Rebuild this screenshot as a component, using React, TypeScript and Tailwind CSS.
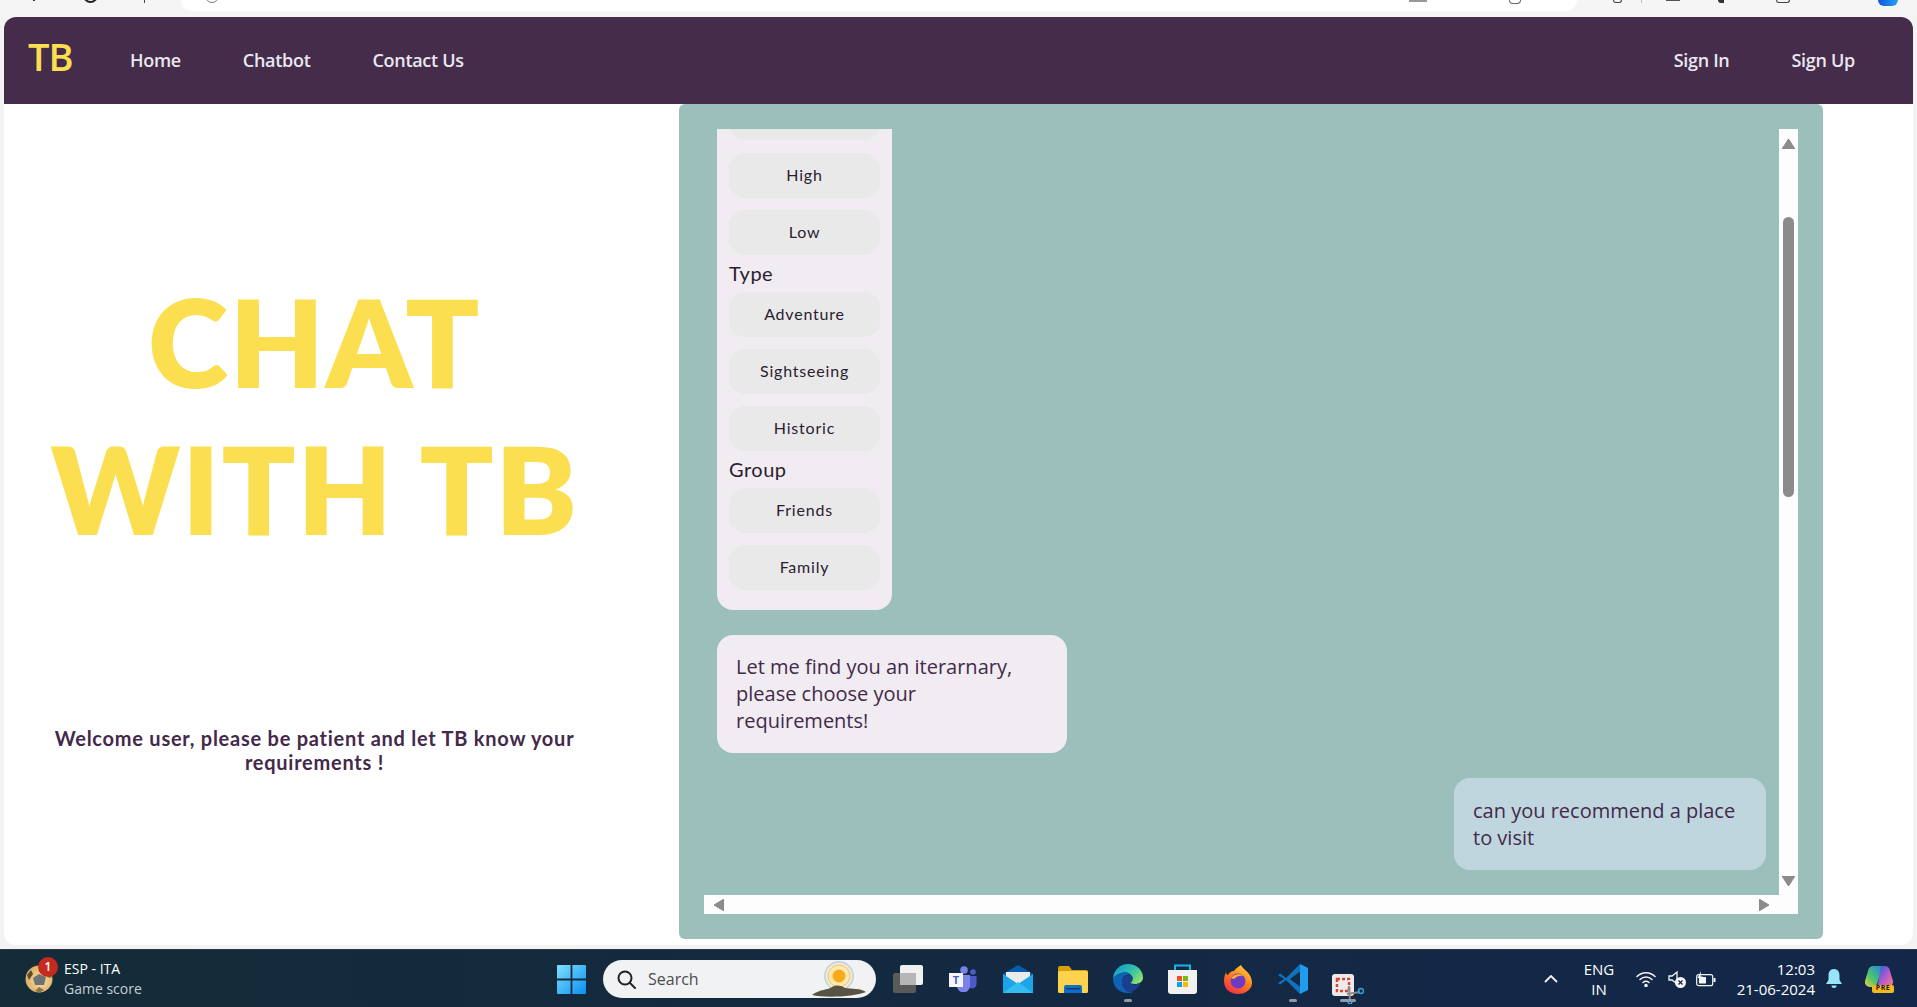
import React from 'react';

const body = { fontFamily: '"Open Sans", "Liberation Sans", sans-serif' };
const heading = { fontFamily: 'Lato, "Open Sans", sans-serif' };

function Option({ label }: { label: string }) {
  return (
    <button className="mt-3 h-[45px] w-full shrink-0 rounded-2xl bg-[#e9e9e9] pb-[2px] text-center text-[16px] tracking-[0.8px] text-[#2b1c30]">
      {label}
    </button>
  );
}

function GroupLabel({ label }: { label: string }) {
  return <div className="flex h-[37px] shrink-0 items-center pb-[2px] text-[20px] tracking-[0.5px] text-[#2b1c30]">{label}</div>;
}

function Arrow({ dir }: { dir: 'up' | 'down' | 'left' | 'right' }) {
  const points = { up: '6.5,0 13,10 0,10', down: '0,0 13,0 6.5,10', left: '10,0 10,12 0,6', right: '0,0 10,6 0,12' }[dir];
  const horizontal = dir === 'left' || dir === 'right';
  return (
    <svg width={horizontal ? 10 : 13} height={horizontal ? 12 : 10} viewBox={horizontal ? '0 0 10 12' : '0 0 13 10'} className="shrink-0">
      <polygon points={points} fill="#8b8b8b" stroke="#8b8b8b" strokeLinejoin="round" strokeWidth="1" />
    </svg>
  );
}

function ChatPanel() {
  return (
    <section className="flex h-full w-[1144px] flex-col rounded-md bg-[#9bbfbb] p-[25px]">
      <div className="flex h-[785px] flex-col">
        <div className="flex min-h-0 flex-1">
          <div className="min-w-0 flex-1 overflow-hidden px-[13px]">
            <div className="flex w-[175px] flex-col overflow-hidden rounded-b-2xl bg-[#f0ecf1] px-3 pb-5" style={heading}>
              <div className="-mt-[34px] h-[45px] shrink-0 rounded-2xl bg-[#e9e9e9]" />
              <div className="h-px shrink-0" />
              <Option label="High" />
              <Option label="Low" />
              <GroupLabel label="Type" />
              <div className="-mt-3" />
              <Option label="Adventure" />
              <Option label="Sightseeing" />
              <Option label="Historic" />
              <GroupLabel label="Group" />
              <div className="-mt-3" />
              <Option label="Friends" />
              <Option label="Family" />
            </div>
            <div className="mt-[25px] w-[350px] rounded-2xl bg-[#f0ecf1] pb-[19px] pl-[19px] pr-5 pt-[18px] text-[20px] leading-[27px] text-[#43294a]" style={body}>
              Let me find you an iterarnary, please choose your requirements!
            </div>
            <div className="ml-auto mt-[25px] w-[312px] rounded-2xl bg-[#bfd6de] px-[19px] py-[19px] text-[20px] leading-[27px] text-[#43294a]" style={body}>
              can you recommend a place to visit
            </div>
          </div>
          <div className="flex w-[19px] shrink-0 flex-col items-center bg-[#fdfdfd] pb-[9px] pt-[10px]">
            <Arrow dir="up" />
            <div className="mt-[68px] h-[280px] w-[11px] rounded-full bg-[#8b8b8b]" />
            <div className="flex-1" />
            <Arrow dir="down" />
          </div>
        </div>
        <div className="flex h-[19px] shrink-0 items-center justify-between bg-[#fdfdfd] pl-[10px] pr-[29px]">
          <Arrow dir="left" />
          <Arrow dir="right" />
        </div>
      </div>
    </section>
  );
}

function Navbar() {
  return (
    <nav className="flex h-[87px] shrink-0 items-center rounded-t-xl bg-[#452c4a] pl-[24px] pr-[58px] font-semibold text-[#e9e8f0]" style={body}>
      <span className="-mt-2 w-[102px] text-[38px] tracking-[-1px] text-[#fbdf50]">TB</span>
      <a className="text-[18px] tracking-[-0.3px]">Home</a>
      <a className="ml-[62px] text-[18px] tracking-[-0.3px]">Chatbot</a>
      <a className="ml-[62px] text-[18px] tracking-[-0.3px]">Contact Us</a>
      <a className="ml-auto text-[18px] tracking-[-0.3px]">Sign In</a>
      <a className="ml-[62px] text-[18px] tracking-[-0.3px]">Sign Up</a>
    </nav>
  );
}

function BrowserStrip() {
  return (
    <div className="flex h-[17px] shrink-0 items-start overflow-hidden bg-[#f5f5f5]">
      <div className="flex w-[181px] shrink-0 items-start">
        <div className="ml-[33px] h-px w-[2px] bg-[#333]" />
        <div className="-mt-3 ml-[48px] h-[15px] w-[15px] rounded-full border-2 border-[#222]" />
        <div className="ml-[46px] h-[3px] w-px bg-[#444]" />
      </div>
      <div className="flex h-[11px] w-[1396px] shrink-0 items-start rounded-b-[14px] bg-white">
        <div className="-mt-3 ml-[24px] h-[15px] w-[14px] rounded-full border border-[#777]" />
        <div className="ml-[1190px] h-[2px] w-[18px] bg-[#999]" />
        <div className="ml-[82px] h-[4px] w-[12px] rounded-b-md border-x border-b border-[#666]" />
      </div>
      <div className="flex flex-1 items-start">
        <div className="ml-[36px] h-[3px] w-[9px] rounded-b-full border-x border-b border-[#444]" />
        <div className="ml-[19px] h-[3px] w-px bg-[#bbb]" />
        <div className="ml-[24px] h-px w-[14px] bg-[#555]" />
        <div className="ml-[38px] h-[3px] w-[6px] rounded-bl-full bg-[#333]" />
        <div className="ml-[52px] h-[3px] w-[14px] rounded-b-sm border-x border-b border-[#444]" />
        <div className="ml-[88px] h-[6px] w-[20px] rounded-b-full bg-gradient-to-r from-[#1358d8] to-[#2ba0f5]" />
      </div>
    </div>
  );
}

function Ball() {
  return (
    <svg width="28" height="28" viewBox="0 0 28 28">
      <defs>
        <radialGradient id="ballg" cx="0.55" cy="0.55" r="0.6">
          <stop offset="0" stopColor="#f8e2b0" />
          <stop offset="1" stopColor="#dca85a" />
        </radialGradient>
      </defs>
      <circle cx="14" cy="14" r="13.5" fill="url(#ballg)" />
      <polygon points="14,9 21,12 19,20 10,20 8,13" fill="#6e7272" />
      <path d="M2 10 L6 5 L8 9 L4 15 Z" fill="#5e4a2c" />
      <path d="M10 26 L14 22 L19 25 L15 27.5 Z" fill="#8c7448" />
      <path d="M23 5 L27 12 L24 13 L21 8 Z" fill="#7c6a48" />
    </svg>
  );
}

function WindowsLogo() {
  return (
    <svg width="29" height="29" viewBox="0 0 29 29">
      <defs>
        <linearGradient id="wing" x1="0" y1="0" x2="1" y2="1">
          <stop offset="0" stopColor="#7fe0ff" />
          <stop offset="1" stopColor="#0a8fef" />
        </linearGradient>
      </defs>
      <path d="M0 1a1 1 0 0 1 1-1h12.6v13.6H0zM15.4 0H28a1 1 0 0 1 1 1v12.6H15.4zM0 15.4h13.6V29H1a1 1 0 0 1-1-1zM15.4 15.4H29V28a1 1 0 0 1-1 1H15.4z" fill="url(#wing)" />
    </svg>
  );
}

function SearchArt() {
  return (
    <svg width="58" height="38" viewBox="0 0 58 38">
      <circle cx="29" cy="16" r="14" fill="#fbeed0" stroke="#c4d8e0" strokeWidth="2" />
      <circle cx="29" cy="16" r="11" fill="#fde9b0" stroke="#eebc78" strokeWidth="1" />
      <circle cx="29" cy="16" r="6.5" fill="#f7ab1a" />
      <path d="M2 35 C10 29 18 30 22 27 C27 24 32 26 35 28 C42 29 50 28 56 32 C44 37 14 38 2 35Z" fill="#5a5344" />
    </svg>
  );
}

function TaskView() {
  return (
    <svg width="30" height="28" viewBox="0 0 30 28">
      <rect x="0" y="8" width="23" height="20" rx="2" fill="#5a5a5a" />
      <rect x="7" y="0" width="23" height="20" rx="2" fill="#f0f0f0" />
      <rect x="7" y="8" width="16" height="12" fill="#b6b6b6" />
    </svg>
  );
}

function Teams() {
  return (
    <svg width="28" height="26" viewBox="0 0 28 26">
      <circle cx="15" cy="4" r="3.8" fill="#7b83eb" />
      <circle cx="24" cy="6" r="2.8" fill="#5059c9" />
      <path d="M19 10h8.5v8a4.5 4.5 0 0 1-8.5 2z" fill="#5059c9" />
      <path d="M8 9h13v11a6.5 6.5 0 0 1-13 0z" fill="#7b83eb" />
      <rect x="0" y="7" width="14" height="14" fill="#f4f4fb" />
      <text x="7" y="18" textAnchor="middle" fontSize="11" fontWeight="700" fill="#5059c9" fontFamily="Open Sans">T</text>
    </svg>
  );
}

function Mail() {
  return (
    <svg width="30" height="28" viewBox="0 0 30 28">
      <path d="M15 0 L30 9 V12 H0 V9Z" fill="#0b5cab" />
      <path d="M3 7 H27 V13 L15 20 L3 13Z" fill="#e9eaec" />
      <path d="M0 9 L15 19 L30 9 V28 H0Z" fill="#1ba4e8" />
      <path d="M0 28 L15 17 L30 28Z" fill="#35bdf2" />
    </svg>
  );
}

function Folder() {
  return (
    <svg width="30" height="27" viewBox="0 0 30 27">
      <path d="M0 2a2 2 0 0 1 2-2h9l3 4h14a2 2 0 0 1 2 2v6H0z" fill="#d99e0b" />
      <rect x="0" y="5" width="30" height="22" rx="1.5" fill="#fdd34d" />
      <path d="M6 27v-6a2 2 0 0 1 2-2h14a2 2 0 0 1 2 2v6z" fill="#0f6fc6" />
      <rect x="8" y="22" width="14" height="1.5" fill="#083f78" />
    </svg>
  );
}

function Edge() {
  return (
    <svg width="30" height="30" viewBox="0 0 30 30">
      <defs>
        <linearGradient id="edge1" x1="0" y1="0" x2="1" y2="0.7">
          <stop offset="0" stopColor="#0f8fd8" />
          <stop offset="0.6" stopColor="#35c1a8" />
          <stop offset="1" stopColor="#8fe36a" />
        </linearGradient>
      </defs>
      <path d="M15 0C23.5 0 30 6 30 13.5c0 4.5-4 6.5-8 6.5-3 0-5-1-5-1 2-1 3-3 2.5-5C18.5 10 15 8 11 8.5 6 9 1.500 12 0 15 0.500 6 7 0 15 0z" fill="url(#edge1)" />
      <path d="M0 15c1.500-3 6-6 11-6.500 4-.5 6 1 6.500 2-4-.5-8.500 2-8.500 7 0 5 4 10 11 11-2 .5-3.500.5-5 .5C6.500 29 0 23 0 15z" fill="#0d63b5" />
      <path d="M9 18c0-5 4.500-7.500 8.500-7 1.500.5 2.500 1.500 2 3.500-.5 2-2 3.500-3 4.500 3 2 8 2 11.500-1-2.500 6-7 10-12 10.500C12 27 9 23 9 18z" fill="#1b3f8f" />
    </svg>
  );
}

function Store() {
  return (
    <svg width="29" height="30" viewBox="0 0 29 30">
      <path d="M7 7V1.500h15V7" fill="none" stroke="#19b5e8" strokeWidth="2" />
      <path d="M0 6h29v21a3 3 0 0 1-3 3H3a3 3 0 0 1-3-3z" fill="#f1f1f1" />
      <rect x="9" y="12" width="5" height="5" fill="#f25022" />
      <rect x="15" y="12" width="5" height="5" fill="#7fba00" />
      <rect x="9" y="18" width="5" height="5" fill="#00a4ef" />
      <rect x="15" y="18" width="5" height="5" fill="#ffb900" />
    </svg>
  );
}

function Firefox() {
  return (
    <svg width="28" height="29" viewBox="0 0 28 29">
      <defs>
        <linearGradient id="ffx" x1="0.8" y1="0" x2="0.2" y2="1">
          <stop offset="0" stopColor="#ffd23f" />
          <stop offset="0.5" stopColor="#ff7b1c" />
          <stop offset="1" stopColor="#f2294c" />
        </linearGradient>
      </defs>
      <path d="M17 0c1 3 5 5 8 9 3 4 3 8 3 9 0 6-6 11-14 11S0 24 0 16C0 12 1 9 2 7c0 2 1 3 2 3 1-2 3-4 6-4 1-2 4-4 7-6z" fill="url(#ffx)" />
      <circle cx="14" cy="16" r="7.5" fill="#6e3bc4" />
      <path d="M7 13c3-4 9-5 13-2-3-1-8 0-10 3z" fill="#ffb02e" />
    </svg>
  );
}

function VSCode() {
  return (
    <svg width="30" height="30" viewBox="0 0 30 30">
      <path d="M22 0 L8 14 L2.500 9.500 L0 11 L6 15 L0 19 L2.500 20.500 L8 16 L22 30 V22.500 L12 15 L22 7.500 Z" fill="#0f72bd" />
      <path d="M22 0 L30 4 V26 L22 30 Z" fill="#1f9cf0" />
    </svg>
  );
}

function Snip() {
  return (
    <svg className="mt-5" width="32" height="30" viewBox="0 0 32 30">
      <rect x="0" y="0" width="22" height="22" rx="3" fill="#eceaea" />
      <rect x="5" y="5" width="12" height="12" fill="none" stroke="#d9452e" strokeWidth="2.500" strokeDasharray="3 2" />
      <path d="M17 12 L18 28" stroke="#8a8a8a" strokeWidth="2" />
      <path d="M15 20 L28 18" stroke="#8a8a8a" strokeWidth="2" />
      <circle cx="29" cy="17" r="2.500" fill="none" stroke="#2ea3dc" strokeWidth="1.500" />
      <circle cx="18" cy="28" r="1.800" fill="none" stroke="#2ea3dc" strokeWidth="1.500" />
    </svg>
  );
}

function TaskIcon({ children, running }: { children: React.ReactNode; running?: 'short' | 'wide' }) {
  return (
    <div className="relative flex h-[56px] w-[55px] shrink-0 items-center justify-center">
      {children}
      {running === 'short' && <span className="absolute bottom-[5px] h-[3px] w-2 rounded-full bg-[#8f9aa3]" />}
      {running === 'wide' && <span className="absolute bottom-[5px] h-[3px] w-[16px] rounded-full bg-[#8f9aa3]" />}
    </div>
  );
}

function Taskbar() {
  return (
    <footer className="flex h-[58px] shrink-0 items-center border-t border-[#2b3a44] bg-gradient-to-r from-[#142b38] to-[#13274a] pt-px text-white" style={body}>
      <div className="relative ml-[25px] flex h-full w-[532px] shrink-0 items-center">
        <Ball />
        <span className="absolute left-[13px] top-[6px] flex h-5 w-5 items-center justify-center rounded-full bg-[#c42b1c] text-[12px] font-semibold">1</span>
        <div className="ml-[11px] flex flex-col text-[14px] leading-[20px]">
          <span>ESP - ITA</span>
          <span className="text-[#c6cfd4]">Game score</span>
        </div>
      </div>
      <WindowsLogo />
      <div className="ml-[17px] flex h-[38px] w-[273px] shrink-0 items-center rounded-full bg-[#f0f2f4] pl-[14px] pr-2 text-[#4c4c4c]">
        <svg width="19" height="19" viewBox="0 0 19 19" fill="none" stroke="#222" strokeWidth="2">
          <circle cx="8" cy="8" r="6.500" />
          <path d="M13 13 L18 18" strokeLinecap="round" />
        </svg>
        <span className="ml-[12px] text-[16px]">Search</span>
        <div className="ml-auto">
          <SearchArt />
        </div>
      </div>
      <div className="ml-[4px] flex">
        <TaskIcon><TaskView /></TaskIcon>
        <TaskIcon><Teams /></TaskIcon>
        <TaskIcon><Mail /></TaskIcon>
        <TaskIcon><Folder /></TaskIcon>
        <TaskIcon running="short"><Edge /></TaskIcon>
        <TaskIcon><Store /></TaskIcon>
        <TaskIcon><Firefox /></TaskIcon>
        <TaskIcon running="short"><VSCode /></TaskIcon>
        <TaskIcon running="wide"><Snip /></TaskIcon>
      </div>
      <svg className="ml-[169px] shrink-0" width="14" height="8" viewBox="0 0 14 8" fill="none" stroke="#f2f2f2" strokeWidth="1.800">
        <path d="M1 7 L7 1 L13 7" />
      </svg>
      <div className="ml-[26px] flex w-[30px] flex-col items-center text-[15px] leading-[20px]">
        <span>ENG</span>
        <span>IN</span>
      </div>
      <svg className="ml-[22px] shrink-0" width="20" height="16" viewBox="0 0 20 16" fill="none" stroke="#f5f5f5" strokeWidth="1.500" strokeLinecap="round">
        <path d="M1 5.500 C6 0.500 14 0.500 19 5.500" />
        <path d="M4 8.500 C7.500 5 12.500 5 16 8.500" />
        <path d="M7 11.500 C8.800 10 11.200 10 13 11.500" />
        <circle cx="10" cy="14.500" r="1" fill="#f5f5f5" />
      </svg>
      <svg className="ml-[12px] shrink-0" width="18" height="18" viewBox="0 0 18 18">
        <path d="M1 6h3l5-4v12l-5-4H1z" fill="none" stroke="#f5f5f5" strokeWidth="1.300" />
        <circle cx="12.500" cy="12.500" r="5.500" fill="#f5f5f5" />
        <path d="M10.500 10.500 L14.500 14.500 M14.500 10.500 L10.500 14.500" stroke="#13274a" strokeWidth="1.300" />
      </svg>
      <svg className="ml-[10px] shrink-0" width="20" height="17" viewBox="0 0 20 17" fill="none">
        <rect x="0.700" y="3.700" width="16" height="11" rx="2" stroke="#f5f5f5" strokeWidth="1.200" />
        <rect x="3" y="6" width="7" height="6.500" fill="#f5f5f5" />
        <rect x="17.500" y="7" width="2" height="4" fill="#f5f5f5" />
        <path d="M5 0 L1.500 7 H4 L2.500 11 L7 5.500 H4.500 Z" fill="#f5f5f5" />
      </svg>
      <div className="ml-auto flex flex-col items-end text-[15px] leading-[20px]">
        <span>12:03</span>
        <span>21-06-2024</span>
      </div>
      <svg className="ml-[11px] shrink-0" width="16" height="20" viewBox="0 0 16 20">
        <path d="M8 0C4 0 2.500 3 2.500 6.500V11L0 15h16l-2.500-4V6.500C13.500 3 12 0 8 0z" fill="#98e4fb" />
        <path d="M5.500 16.500h5a2.500 2.500 0 0 1-5 0z" fill="#98e4fb" />
      </svg>
      <div className="relative ml-[23px] mr-[24px] h-[27px] w-[28px] shrink-0">
        <svg width="28" height="22" viewBox="0 0 28 22">
          <defs>
            <linearGradient id="cop1" x1="0" y1="1" x2="1" y2="0">
              <stop offset="0" stopColor="#f6d13e" />
              <stop offset="0.4" stopColor="#4fc56a" />
              <stop offset="1" stopColor="#1a84e8" />
            </linearGradient>
            <linearGradient id="cop2" x1="0" y1="0" x2="1" y2="1">
              <stop offset="0" stopColor="#2360e0" />
              <stop offset="0.6" stopColor="#c95bc8" />
              <stop offset="1" stopColor="#f08a68" />
            </linearGradient>
          </defs>
          <path d="M9 0h9L12 18a5 5 0 0 1-4 3H5a5 5 0 0 1-5-6l3-10a6 6 0 0 1 6-5z" fill="url(#cop1)" />
          <path d="M16 0h3a6 6 0 0 1 6 5l3 10c.5 3-2 6-5 6h-8c-2 0-3-1-2-3z" fill="url(#cop2)" />
        </svg>
        <span className="absolute -right-[1px] bottom-0 flex h-[8px] w-[22px] items-center justify-center rounded-[2px] bg-[#f5b81f] text-[7px] font-bold tracking-[0.5px] text-[#1a1a1a]">PRE</span>
      </div>
    </footer>
  );
}

export default function App() {
  return (
    <div className="flex h-[1007px] w-[1917px] flex-col overflow-hidden bg-[#f3f3f3]">
      <BrowserStrip />
      <div className="ml-[4px] mr-[4px] flex h-[928px] shrink-0 flex-col rounded-xl bg-white">
        <Navbar />
        <main className="flex min-h-0 flex-1 pb-[6px]">
          <div className="flex w-[621px] shrink-0 flex-col items-center" style={heading}>
            <h1 className="mt-[164px] text-center text-[122px] font-extrabold leading-[147px] tracking-[1.5px] text-[#fbdf50]">
              CHAT
              <br />
              WITH TB
            </h1>
            <p className="mt-[164px] w-[560px] text-center text-[20px] font-bold leading-[24px] tracking-[0.75px] text-[#43294a]">
              Welcome user, please be patient and let TB know your requirements !
            </p>
          </div>
          <div className="ml-[54px]">
            <ChatPanel />
          </div>
        </main>
      </div>
      <div className="h-[4px] shrink-0" />
      <Taskbar />
    </div>
  );
}
